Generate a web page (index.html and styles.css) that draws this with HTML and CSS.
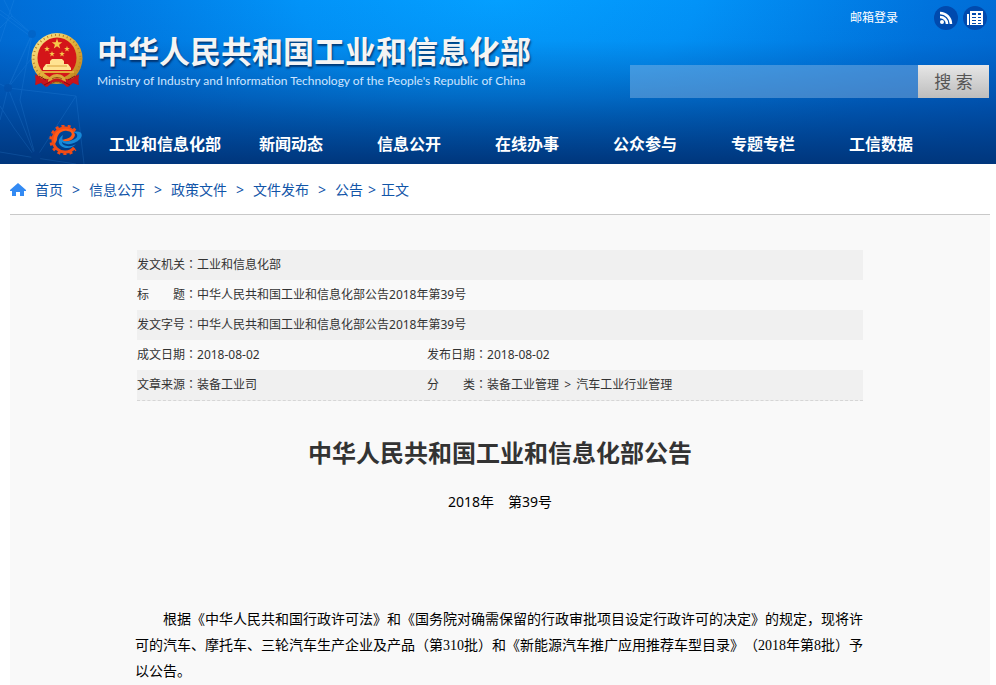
FILE: index.html
```html
<!DOCTYPE html>
<html lang="zh-CN">
<head>
<meta charset="utf-8">
<meta name="viewport" content="width=device-width, initial-scale=1">
<title>中华人民共和国工业和信息化部公告</title>
<link rel="stylesheet" href="styles.css">
</head>
<body>
<header class="site-header">
  <svg class="network" width="100" height="164" viewBox="0 0 100 164" fill="none" stroke="#3f9bf0" aria-hidden="true">
    <path d="M0 10 32 34 8 88 0 84M14 0 0 42M0 14 30 36M32 34 8 88 36 158M8 88 38 50M8 88 76 96M8 88 0 120M0 152 36 158 76 96M36 158 76 164M36 158 14 128 0 106M76 96 84 164M32 34 20 100 36 158M4 0 12 16 0 28M12 16 32 34"/>
    <g fill="#083f91" stroke="none"><circle cx="32" cy="34" r="4"/><circle cx="8" cy="88" r="4"/><circle cx="36" cy="156" r="5"/></g>
  </svg>
  <div class="masthead">
    <div class="brand">
      <svg class="emblem" width="54" height="56" viewBox="0 0 54 56" role="img" aria-label="国徽">
        <defs>
          <linearGradient id="gold" x1="0" y1="0" x2="1" y2="1"><stop offset="0" stop-color="#fff0a0"/><stop offset=".5" stop-color="#e3b23c"/><stop offset="1" stop-color="#b97a18"/></linearGradient>
          <path id="star" d="M0-5 1.2-1.6 4.8-1.5 1.9.6 2.9 4 0 2-2.9 4-1.9.6-4.8-1.5-1.2-1.6Z"/>
        </defs>
        <path d="M8 38 5 53l6-2 5 4 4-5h14l4 5 5-4 6 2-3-15Z" fill="#ba141c"/>
        <ellipse cx="27" cy="26.500" rx="25.500" ry="25.500" fill="url(#gold)"/>
        <ellipse cx="27" cy="26.500" rx="23.500" ry="23.500" fill="none" stroke="#b98122" stroke-width="2" stroke-dasharray="1 3"/>
        <ellipse cx="27" cy="26" rx="19.500" ry="20.500" fill="#d41519"/>
        <g fill="#f6c94a">
          <use href="#star" transform="translate(27 12) scale(1.1)"/>
          <use href="#star" transform="translate(17 17) scale(.6)"/><use href="#star" transform="translate(37 17) scale(.6)"/>
          <use href="#star" transform="translate(22 22) scale(.6)"/><use href="#star" transform="translate(32 22) scale(.6)"/>
        </g>
        <path d="m20 29 2-2h10l2 2v3h4l3 4v2H13v-2l3-4h4Z" fill="#ffe391"/>
        <path d="M17 34h20" stroke="#d9a23c"/>
        <path d="M10 40h34" stroke="#e4a93b" stroke-width="2"/>
        <path d="M5 42c5 6 12 6 18 4l4-3 4 3c6 2 13 2 18-4l-1 11-6-3-5 5-6-5h-8l-6 5-5-5-6 3Z" fill="#c8151c"/>
        <path d="M18 50c0-5 4-8 9-8s9 3 9 8l-4-2c-3-2-7-2-10 0Z" fill="#dba63a"/>
        <path d="M22 47c3-2 7-2 10 0M21 52c4-3 8-3 12 0" stroke="#8f5614" fill="none"/>
        <path d="m20 50-6 3m20-3 6 3M9 44l7 4m29-4-7 4" stroke="#840d13"/>
      </svg>
      <div>
        <div class="brand-name">中华人民共和国工业和信息化部</div>
        <div class="brand-english">Ministry of Industry and Information Technology of the People's Republic of China</div>
      </div>
    </div>
    <div class="tools">
      <div class="quick-links">
        <a class="mail" href="#">邮箱登录</a>
        <a class="round" href="#" aria-label="RSS">
          <svg width="14" height="14" viewBox="0 0 14 14" fill="none" stroke="#fff" stroke-width="2.500"><circle cx="3" cy="11" r="2" fill="#fff" stroke="none"/><path d="M1 6c4 0 7 3 7 7M1 2c6 0 11 5 11 11"/></svg>
        </a>
        <a class="round" href="#" aria-label="电子报">
          <svg width="16" height="14" viewBox="0 0 16 14"><path d="M0 3h2v11H0ZM3 0h13v14H3Z" fill="#fff"/><path d="M5 2h4v2H5Zm0 4h4v1H5Zm0 3h4v1H5Zm0 3h4v1H5Zm6-10h3v2h-3Zm0 4h3v1h-3Zm0 3h3v1h-3Zm0 3h3v1h-3Z" fill="#004aae"/></svg>
        </a>
      </div>
      <form class="search">
        <input type="search" aria-label="搜索内容">
        <button type="button">搜 索</button>
      </form>
    </div>
  </div>
  <nav class="main-nav" aria-label="主导航">
    <svg class="nav-logo" width="34" height="30" viewBox="0 0 34 30" aria-hidden="true">
      <g fill="none" stroke="#f04b16">
        <path d="M25.200 7.300A12 12 0 1 0 25.200 22.700" stroke-width="3"/>
        <path d="M26.300 5.700A14 14 0 1 0 26.300 24.300" stroke-width="3" stroke-dasharray="3 3"/>
      </g>
      <path d="M8 15c0-6 5-10 10-9 4 0 6 3 4 5-2 3-6 3-10 4l1 2c6 0 12-2 13-7-1-5-6-7-12-6-8 1-12 9-8 15Z" fill="#ff5c18"/>
      <path d="M24 7c8-2 11 2 7 7-5 5-13 7-18 3 0 4 8 6 14 2-5 6-15 5-17-1-1-3 1-6 4-8-1 3-1 5 1 6 5 1 11-1 13-4 1-3-1-4-4-5Z" fill="#1689d8"/>
    </svg>
    <ul>
      <li><a href="#">工业和信息化部</a></li>
      <li><a href="#">新闻动态</a></li>
      <li><a href="#">信息公开</a></li>
      <li><a href="#">在线办事</a></li>
      <li><a href="#">公众参与</a></li>
      <li><a href="#">专题专栏</a></li>
      <li><a href="#">工信数据</a></li>
    </ul>
  </nav>
</header>
<nav class="breadcrumb" aria-label="当前位置">
  <svg width="16" height="14" viewBox="0 0 16 14" aria-hidden="true"><path d="M8 0 0 7v1h2v5h4V9h4v4h4V8h2V7Z" fill="#338af3"/></svg>
  <a href="#">首页</a><span>&gt;</span><a href="#">信息公开</a><span>&gt;</span><a href="#">政策文件</a><span>&gt;</span><a href="#">文件发布</a><span>&gt;</span><a href="#">公告</a><span class="last">&gt;</span><a href="#">正文</a>
</nav>
<main class="sheet">
  <table class="meta">
    <tr><th scope="row">发文机关<span lang="zh-TW">：</span></th><td colspan="3">工业和信息化部</td></tr>
    <tr><th scope="row">标　　题<span lang="zh-TW">：</span></th><td colspan="3">中华人民共和国工业和信息化部公告2018年第39号</td></tr>
    <tr><th scope="row">发文字号<span lang="zh-TW">：</span></th><td colspan="3">中华人民共和国工业和信息化部公告2018年第39号</td></tr>
    <tr><th scope="row">成文日期<span lang="zh-TW">：</span></th><td class="first-value">2018-08-02</td><th scope="row">发布日期<span lang="zh-TW">：</span></th><td>2018-08-02</td></tr>
    <tr><th scope="row">文章来源<span lang="zh-TW">：</span></th><td class="first-value">装备工业司</td><th scope="row">分　　类<span lang="zh-TW">：</span></th><td>装备工业管理 <span class="divider">&gt;</span> 汽车工业行业管理</td></tr>
  </table>
  <article>
    <h1>中华人民共和国工业和信息化部公告</h1>
    <p class="issue">2018年　第39号</p>
    <p class="text">根据《中华人民共和国行政许可法》和《国务院对确需保留的行政审批项目设定行政许可的决定》的规定，现将许可的汽车、摩托车、三轮汽车生产企业及产品（第310批）和《新能源汽车推广应用推荐车型目录》（2018年第8批）予以公告。</p>
  </article>
</main>
</body>
</html>
```
FILE: styles.css
```css
* { box-sizing: border-box; }
body {
  margin: 0;
  min-height: 100vh;
  display: flex;
  flex-direction: column;
  background: #fff;
  color: #333;
  font: 12px/30px "Noto Sans", "Noto Sans CJK SC", sans-serif;
  text-spacing-trim: space-all;
}
a { color: inherit; text-decoration: none; }
.site-header {
  position: relative;
  color: #fff;
  background:
    linear-gradient(to bottom, rgba(0, 50, 125, 0) 0%, rgba(0, 50, 125, .04) 25%, rgba(0, 50, 125, .42) 60%, #00367c 100%),
    radial-gradient(ellipse 62% 180% at 50% 0%, #049fff 0%, #0293f8 32%, #0073dd 70%, #0062ca 100%);
}
.network { position: absolute; left: 0; top: 0; opacity: .18; }
.masthead { position: relative; display: flex; justify-content: space-between; min-height: 124px; }
.brand { display: flex; gap: 13px; padding: 32px 0 0 30px; }
.emblem { flex: none; }
.brand-name {
  font-size: 31px;
  font-weight: 700;
  line-height: 38px;
  white-space: nowrap;
  color: #f4f4f4;
  text-shadow: 1px 2px 2px rgba(0, 25, 70, .7);
}
.brand-english { font: 12px/22px Lato, "Noto Sans", sans-serif; color: #cde5ff; white-space: nowrap; }
.tools { flex: 0 1 366px; padding: 5px 7px 0 0; }
.quick-links { display: flex; justify-content: flex-end; align-items: center; height: 25px; gap: 5px; padding-right: 2px; }
.mail { margin-right: 31px; }
.round { display: grid; place-items: center; width: 24px; height: 24px; border-radius: 50%; background: #004aae; }
.search { display: flex; height: 33px; margin-top: 35px; }
.search input { flex: 1; min-width: 0; border: 0; padding: 0 10px; border-radius: 0; background: rgba(150, 190, 230, .42); color: #fff; outline: 0; appearance: none; }
.search button { width: 71px; border: 0; padding: 0; font: 17px/33px "Noto Sans", "Noto Sans CJK SC", sans-serif; color: #555; background: linear-gradient(#e6e6e6, #bdbdbd); }
.main-nav { position: relative; display: flex; height: 40px; padding: 0 56px 0 49px; }
.nav-logo { flex: none; margin-top: 1px; }
.main-nav ul { flex: 1; display: grid; grid-template-columns: 134fr repeat(6, 118fr); margin: 0 0 0 15px; padding: 0; list-style: none; text-align: center; font-size: 16px; font-weight: 700; line-height: 40px; white-space: nowrap; }
.breadcrumb { display: flex; align-items: center; margin: 0 6px 0 10px; padding-top: 2px; height: 51px; border-bottom: 1px solid #c9c9c9; color: #1155a8; font-size: 14px; }
.breadcrumb svg { margin-right: 9px; }
.breadcrumb span { width: 26px; text-align: center; }
.breadcrumb .last { width: 18px; }
.sheet { flex: 1; margin: 0 6px 0 10px; padding-top: 35px; background: #f9f9f9; }
.meta { width: calc(100% - 254px); margin: 0 auto; border-collapse: collapse; border-bottom: 1px dashed #d6d6d6; }
.meta th, .meta td { height: 30px; padding: 0; text-align: left; font-weight: 400; }
.meta th { width: 60px; white-space: nowrap; }
/* the traditional face centres the full-width colon in its cell */
.meta th span { font-family: "Noto Sans CJK TC", sans-serif; line-height: 20px; }
.meta .first-value { width: 230px; }
.meta .divider { padding: 0 2px; }
.meta tr:nth-child(odd) { background: #f0f0f0; }
article { width: calc(100% - 250px); margin: 0 auto; color: #000; }
h1 { margin: 32px 0 0; font-size: 24px; line-height: 40px; text-align: center; color: #333; }
.issue { margin: 14px 0 90px; font-size: 14px; line-height: 30px; text-align: center; }
.text { margin: 0; font: 14px/26px "Liberation Serif", "Noto Sans CJK SC", serif; text-indent: 28px; }
```
